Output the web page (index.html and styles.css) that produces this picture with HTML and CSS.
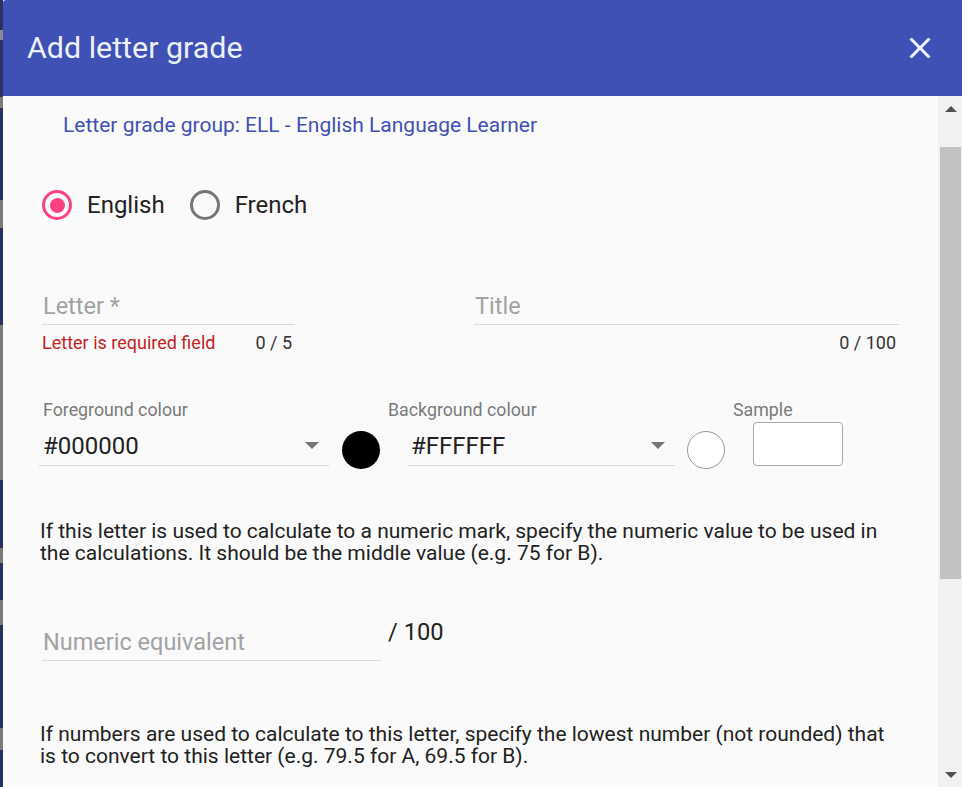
FILE: index.html
```html
<!DOCTYPE html>
<html lang="en">
<head>
<meta charset="utf-8">
<title>Add letter grade</title>
<link rel="stylesheet" href="styles.css">
</head>
<body>
<div class="page">
  <div class="backdrop"></div>
  <div class="dialog">
    <header class="dialog-header">
      <h1 class="dialog-title">Add letter grade</h1>
      <button class="close-btn" aria-label="Close">
        <svg viewBox="0 0 24 24" width="36" height="36"><path fill="currentColor" d="M19 6.41L17.59 5 12 10.59 6.41 5 5 6.41 10.59 12 5 17.59 6.41 19 12 13.41 17.59 19 19 17.59 13.41 12z"/></svg>
      </button>
    </header>
    <div class="dialog-body">
      <div class="content">
        <div class="group-link">Letter grade group: ELL - English Language Learner</div>

        <div class="radios">
          <label class="radio checked"><span class="radio-circle"><span class="radio-dot"></span></span><span class="radio-label">English</span></label>
          <label class="radio"><span class="radio-circle"></span><span class="radio-label">French</span></label>
        </div>

        <div class="fields-row">
          <div class="field field-letter">
            <div class="input-line"><span class="placeholder">Letter *</span></div>
            <div class="hint-row"><span class="error">Letter is required field</span><span class="counter">0 / 5</span></div>
          </div>
          <div class="field field-title">
            <div class="input-line"><span class="placeholder">Title</span></div>
            <div class="hint-row"><span class="error"></span><span class="counter">0 / 100</span></div>
          </div>
        </div>

        <div class="colour-row">
          <div class="colour-group fg-group">
            <div class="small-label">Foreground colour</div>
            <div class="select fg-select"><span class="select-value">#000000</span><span class="select-arrow"></span></div>
          </div>
          <span class="swatch swatch-black"></span>
          <div class="colour-group bg-group">
            <div class="small-label">Background colour</div>
            <div class="select bg-select"><span class="select-value">#FFFFFF</span><span class="select-arrow"></span></div>
          </div>
          <span class="swatch swatch-white"></span>
          <div class="colour-group sample-group">
            <div class="small-label">Sample</div>
            <div class="sample-box"></div>
          </div>
        </div>

        <p class="para para-1">If this letter is used to calculate to a numeric mark, specify the numeric value to be used in the calculations. It should be the middle value (e.g. 75 for B).</p>

        <div class="numeric-row">
          <div class="field field-numeric">
            <div class="input-line"><span class="placeholder">Numeric equivalent</span></div>
          </div>
          <span class="suffix">/ 100</span>
        </div>

        <p class="para para-2">If numbers are used to calculate to this letter, specify the lowest number (not rounded) that is to convert to this letter (e.g. 79.5 for A, 69.5 for B).</p>
      </div>
      <div class="scrollbar">
        <span class="sb-arrow sb-up"></span>
        <span class="sb-thumb"></span>
        <span class="sb-arrow sb-down"></span>
      </div>
    </div>
  </div>
</div>
</body>
</html>
```

FILE: styles.css
```css
* { box-sizing: border-box; }
html, body { margin: 0; padding: 0; height: 100%; }
body {
  font-family: Roboto, "Noto Sans", "Liberation Sans", sans-serif;
  background: #fafafa;
  overflow: hidden;
}
.page {
  display: flex;
  width: 962px;
  height: 787px;
}
.backdrop {
  width: 3px;
  flex: none;
  background: linear-gradient(to bottom,
    #2a3266 0, #2a3266 30px, #8a8a90 30px, #8a8a90 40px,
    #2a3266 40px, #2a3266 97px, #7d7d7d 97px, #7d7d7d 108px,
    #283060 108px, #283060 200px, #7b7b7b 200px, #7b7b7b 228px,
    #283060 228px, #283060 325px, #7b7b7b 325px, #7b7b7b 480px,
    #283060 480px, #283060 548px, #7b7b7b 548px, #7b7b7b 563px,
    #283060 563px, #283060 600px, #7b7b7b 600px, #7b7b7b 625px,
    #283060 625px, #283060 728px, #7b7b7b 728px, #7b7b7b 750px,
    #283060 750px, #283060 787px);
}
.dialog {
  flex: 1;
  display: flex;
  flex-direction: column;
  background: #fafafa;
  border-top-left-radius: 3px;
  overflow: hidden;
}
.dialog-header {
  height: 96px;
  flex: none;
  background: #3f51b5;
  display: flex;
  align-items: center;
  justify-content: space-between;
  padding: 0 24px 0 24px;
}
.dialog-title {
  margin: 0;
  font-size: 30.4px;
  font-weight: 400;
  line-height: 36px;
  color: #eef0fa;
  letter-spacing: 0;
}
.close-btn {
  border: 0;
  background: none;
  padding: 0;
  width: 36px;
  height: 36px;
  color: #eef0fa;
  display: block;
}
.close-btn svg { display: block; }

.dialog-body {
  flex: 1;
  display: flex;
  min-height: 0;
}
.content {
  flex: 1;
  overflow: hidden;
  padding: 17px 0 0 37px;
  color: #222;
}
.group-link {
  margin-left: 23px;
  font-size: 21px;
  line-height: 24px;
  color: #3f51b5;
}

.radios {
  margin-top: 48px;
  display: flex;
  align-items: center;
  height: 40px;
}
.radio {
  display: flex;
  align-items: center;
  margin-right: 25px;
}
.radio:first-child { margin-left: 2px; }
.radio-circle {
  width: 30px;
  height: 30px;
  border-radius: 50%;
  border: 3px solid #757575;
  display: flex;
  align-items: center;
  justify-content: center;
}
.radio.checked .radio-circle { border-color: #ff4081; }
.radio-dot {
  width: 15px;
  height: 15px;
  border-radius: 50%;
  background: #ff4081;
}
.radio-label {
  margin-left: 15px;
  font-size: 24px;
  line-height: 28px;
  color: #222;
}

.fields-row {
  margin-top: 55px;
  display: flex;
  align-items: flex-start;
}
.field-letter { width: 253px; margin-left: 2px; }
.field-title { width: 425px; margin-left: 179px; }
.input-line {
  height: 45px;
  border-bottom: 1px solid #d9d9d9;
  display: flex;
  align-items: flex-end;
  padding: 0 0 5px 1px;
}
.placeholder {
  font-size: 23.5px;
  line-height: 26px;
  color: #a2a2a2;
}
.hint-row {
  margin-top: 8px;
  display: flex;
  justify-content: space-between;
  font-size: 18px;
  line-height: 20px;
  padding-right: 3px;
}
.error { color: #c21f1f; }
.counter { color: #333; }

.colour-row {
  margin-top: 47px;
  display: flex;
  align-items: flex-start;
}
.small-label {
  font-size: 17.8px;
  line-height: 20px;
  color: #7a7a7a;
}
.fg-group { margin-left: -1px; width: 290px; }
.fg-group .small-label { padding-left: 4px; }
.select {
  height: 46px;
  border-bottom: 1px solid #d9d9d9;
  display: flex;
  align-items: flex-end;
  justify-content: space-between;
  padding: 0 10px 6px 4px;
}
.bg-select { padding-left: 3px; margin-left: 20px; width: 267px; }
.select-value {
  font-size: 24px;
  line-height: 26px;
  color: #222;
}
.select-arrow {
  width: 0;
  height: 0;
  border-left: 7.5px solid transparent;
  border-right: 7.5px solid transparent;
  border-top: 7.5px solid #757575;
  margin-bottom: 10px;
}
.swatch {
  width: 38px;
  height: 38px;
  border-radius: 50%;
  margin-top: 31px;
  flex: none;
}
.swatch-black { background: #000; margin-left: 13px; }
.swatch-white { background: #fff; border: 1px solid #9a9a9a; margin-left: 12px; }
.bg-group { margin-left: 8px; }
.sample-group { margin-left: 8px; }
.sample-box {
  margin-top: 2px;
  margin-left: 20px;
  width: 90px;
  height: 44px;
  border: 1px solid #a9a9a9;
  border-radius: 4px;
  background: #fff;
}

.para {
  margin: 0;
  font-size: 21px;
  line-height: 21.5px;
  color: #222;
  max-width: 862px;
}
.para-1 { margin-top: 52px; }

.numeric-row {
  margin-top: 52px;
  display: flex;
  align-items: flex-start;
}
.field-numeric { width: 339px; margin-left: 2px; }
.suffix {
  margin-left: 7px;
  margin-top: 3px;
  font-size: 23.7px;
  line-height: 26px;
  color: #222;
}
.para-2 { margin-top: 63px; }

.scrollbar {
  width: 24px;
  flex: none;
  background: #f1f1f1;
  position: relative;
}
.sb-arrow {
  position: absolute;
  left: 7px;
  width: 0;
  height: 0;
  border-left: 6px solid transparent;
  border-right: 6px solid transparent;
}
.sb-up { top: 10px; border-bottom: 6px solid #505050; }
.sb-down { bottom: 9px; border-top: 6px solid #505050; }
.sb-thumb {
  position: absolute;
  left: 2px;
  right: 1px;
  top: 51px;
  height: 432px;
  background: #c1c1c1;
}
```
